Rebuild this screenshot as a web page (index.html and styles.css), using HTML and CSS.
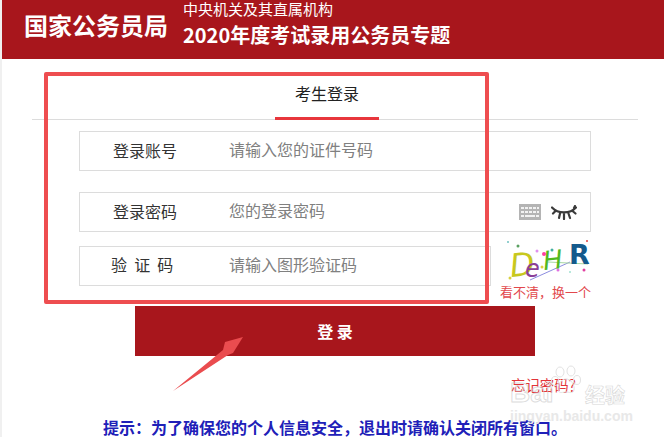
FILE: index.html
```html
<!DOCTYPE html>
<html lang="zh">
<head>
<meta charset="utf-8">
<title>考生登录</title>
<link rel="stylesheet" href="styles.css">
</head>
<body>
<div class="page">
  <header class="header">
    <div class="org">国家公务员局</div>
    <div class="titles">
      <div class="sub">中央机关及其直属机构</div>
      <div class="main">2020年度考试录用公务员专题</div>
    </div>
  </header>
  <section class="login">
    <nav class="tabs"><span class="tab">考生登录</span></nav>
    <div class="field first">
      <label class="label">登录账号</label>
      <span class="ph">请输入您的证件号码</span>
    </div>
    <div class="field second">
      <label class="label">登录密码</label>
      <span class="ph">您的登录密码</span>
      <span class="tools">
        <svg class="kbd" width="22" height="16" viewBox="0 0 22 16"><rect width="22" height="16" fill="#b4b4b4"/><g fill="#f2f2f2"><rect x="2" y="3" width="3" height="2"/><rect x="6" y="3" width="3" height="2"/><rect x="10" y="3" width="3" height="2"/><rect x="14" y="3" width="3" height="2"/><rect x="18" y="3" width="2" height="2"/><rect x="2" y="7" width="3" height="2"/><rect x="6" y="7" width="3" height="2"/><rect x="10" y="7" width="3" height="2"/><rect x="14" y="7" width="3" height="2"/><rect x="18" y="7" width="2" height="2"/><rect x="2" y="11" width="3" height="2"/><rect x="6" y="11" width="10" height="2"/><rect x="17" y="11" width="3" height="2"/></g></svg>
        <svg class="eye" width="26" height="15" viewBox="0 0 26 15" fill="none" stroke="#3a3a3a" stroke-width="2.200" stroke-linecap="round"><path d="M1 2.500C7 9 19 9 25 2.500"/><path d="M4.500 6 2 8.500M9 8.500 8 13M13 9v5M17.500 8.500 19 13M21.500 6 24.500 8.500M24 1l-1 2"/></svg>
      </span>
    </div>
    <div class="code-row">
      <div class="field third">
        <label class="label spaced">验&nbsp;&nbsp;证&nbsp;&nbsp;码</label>
        <span class="ph">请输入图形验证码</span>
      </div>
      <div class="captcha">
        <svg class="captcha-img" width="91" height="45" viewBox="0 0 91 45">
          <g fill="none"><path d="M30 40 70 22" stroke="#8d8de0" stroke-width="1"/><path d="M48 22 88 24" stroke="#a8d8a0" stroke-width="1"/></g>
          <text class="cap c1" x="11" y="37" transform="rotate(-6 11 37)">D</text>
          <text class="cap c2" x="25" y="37">e</text>
          <text class="cap c3" x="44" y="30" transform="rotate(-6 44 30)">H</text>
          <text class="cap c4" x="69" y="24">R</text>
          <g><circle cx="44" cy="14" r="2" fill="#ff3fa0"/><circle cx="37" cy="11" r="1.500" fill="#e090f0"/><circle cx="18" cy="6" r="1.500" fill="#5aa060"/><circle cx="52" cy="10" r="1.500" fill="#40b0a0"/><circle cx="8" cy="2" r="1" fill="#70c0c0"/><circle cx="10" cy="38" r="1.500" fill="#d8d040"/><circle cx="58" cy="30" r="1.500" fill="#e070e0"/><circle cx="84" cy="30" r="1.500" fill="#e040a0"/><circle cx="70" cy="32" r="1" fill="#a0e0d0"/><circle cx="42" cy="27" r="1.500" fill="#e0d040"/><circle cx="87" cy="1" r="1" fill="#e04040"/></g>
        </svg>
        <a class="refresh">看不清，换一个</a>
      </div>
    </div>
    <button class="submit">登 录</button>
    <div class="forgot-row"><a class="forgot">忘记密码？</a></div>
    <p class="notice">提示：为了确保您的个人信息安全，退出时请确认关闭所有窗口。</p>
  </section>

  <div class="mark-box"></div>
  <svg class="arrow" width="76" height="60" viewBox="0 0 76 60"><path d="M2 57 52 16 54 8 72 3 62 19 57 21Z" fill="#ea4c4f"/></svg>
  <div class="watermark">
    <svg class="paw" width="32" height="32" viewBox="0 0 30 32" fill="none" stroke="#e2e2e2"><ellipse cx="9" cy="7" rx="4" ry="5"/><ellipse cx="20" cy="6" rx="4" ry="5"/><ellipse cx="26" cy="15" rx="3.500" ry="4.500"/><ellipse cx="4" cy="16" rx="3.500" ry="4.500"/><path d="M15 14c5 0 9 6 8 11-1 4-5 2-8 2s-7 2-8-2c-1-5 3-11 8-11z"/></svg>
    <span class="wm-bai">Bai</span>
    <span class="wm-jy">经验</span>
    <span class="wm-url">jingyan.baidu.com</span>
  </div>
</div>
</body>
</html>
```
FILE: styles.css
```css
* { box-sizing: border-box; }
html, body { margin: 0; padding: 0; height: 100%; overflow: hidden; background: #fff; }
body { font-family: "Noto Sans CJK SC", "Liberation Sans", sans-serif; color: #333; }
.page { position: relative; width: 664px; height: 437px; overflow: hidden; border-left: 2px solid #f0f0f0; }
.header { height: 59px; background: #a8161c; color: #fff; display: flex; align-items: flex-start; padding-left: 22px; }
.org { font-size: 24px; font-weight: 700; line-height: 28px; margin-top: 11px; width: 159px; white-space: nowrap; }
.titles { white-space: nowrap; }
.sub { font-size: 15px; line-height: 18px; }
.main { font-size: 20px; font-weight: 700; line-height: 28px; margin-top: 3px; }
.login { display: flex; flex-direction: column; padding-left: 30px; }
.tabs { width: 606px; height: 61px; border-bottom: 1px solid #dcdcdc; display: flex; justify-content: flex-start; padding-left: 243px; }
.tab { width: 104px; height: 61px; text-align: center; font-size: 16px; line-height: 20px; color: #222; padding-top: 24px; border-bottom: 3px solid #e8363c; margin-bottom: -1px; }
.field { margin-left: 47px; height: 40px; border: 1px solid #dcdcdc; display: flex; align-items: center; font-size: 16px; white-space: nowrap; }
.field.first, .field.second { width: 512px; }
.field.first { margin-top: 11px; }
.field.second { margin-top: 21px; }
.field.third { width: 412px; }
.label { width: 130px; padding-left: 33px; padding-bottom: 3px; flex: none; color: #333; line-height: 20px; }
.label.spaced { padding-left: 31px; padding-bottom: 5px; }
.ph { flex: 1; padding-left: 19px; padding-bottom: 5px; color: #808080; line-height: 20px; }
.tools { display: flex; align-items: center; gap: 10px; padding-right: 13px; }
.kbd { display: block; }
.eye { display: block; }
.code-row { display: flex; margin-top: 14px; height: 60px; }
.captcha { margin-left: 9px; margin-top: -6px; width: 91px; height: 60px; display: flex; flex-direction: column; }
.captcha-img { display: block; flex: none; }
.cap { font-family: "DejaVu Sans", sans-serif; font-size: 30px; font-style: italic; }
.c1 { fill: #c8c81e; font-size: 32px; }
.c2 { fill: #8a3f98; font-size: 24px; }
.c3 { fill: #52b81e; font-size: 26px; }
.c4 { fill: #145a8c; font-size: 27px; font-weight: 700; font-style: normal; }
.refresh { font-size: 13px; line-height: 14px; color: #e2484c; white-space: nowrap; }
.submit { display: block; margin: 0 0 0 103px; width: 400px; height: 50px; border: 0; background: #a8161c; color: #fff; font: 700 16px/50px "Noto Sans CJK SC", sans-serif; padding: 0; flex: none; }
.forgot-row { padding-left: 479px; height: 20px; margin-top: 16px; }
.forgot { font-size: 14.400px; line-height: 20px; color: #e2343a; white-space: nowrap; }
.notice { margin: 26px 0 0 71px; font-size: 16px; font-weight: 700; line-height: 18px; color: #2020b8; white-space: nowrap; }
.mark-box { position: absolute; left: 42px; top: 72px; width: 445px; height: 232px; border: 4px solid #ee4d50; border-radius: 2px; }
.arrow { position: absolute; left: 169px; top: 334px; }
.watermark { position: absolute; left: 506px; top: 362px; width: 124px; height: 62px; }
.paw { position: absolute; left: 42px; top: 3px; }
.wm-bai { position: absolute; left: 2px; top: 17px; font: 700 28px/28px "Liberation Sans", sans-serif; color: transparent; -webkit-text-stroke: 1px rgba(205,205,205,.7); }
.wm-jy { position: absolute; left: 77px; top: 21px; font: 700 20px/24px "Noto Sans CJK SC", sans-serif; color: transparent; -webkit-text-stroke: .6px #d8d8d8; }
.wm-url { position: absolute; left: 2px; top: 46px; font: 700 14px/16px "Liberation Sans", sans-serif; color: #e8e8e8; white-space: nowrap; }
```
